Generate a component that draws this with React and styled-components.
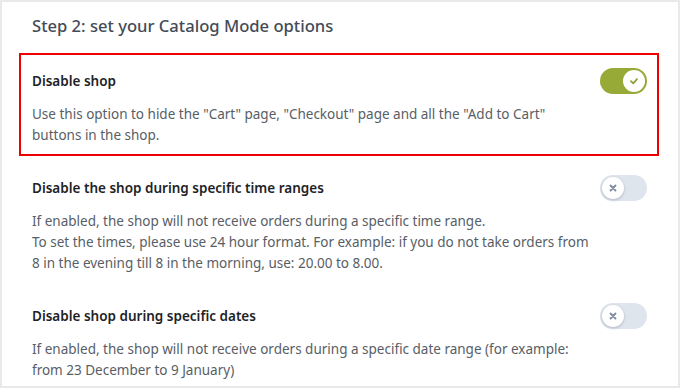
import React from 'react'
import styled, { createGlobalStyle } from 'styled-components';

const GlobalStyle = createGlobalStyle`
body {
    margin: 0;
    background: #ffffff;
}
* {
    box-sizing: border-box;
}
`

const Card = styled.div`
width: 680px;
height: 388px;
overflow: hidden;
background: #ffffff;
border: 2px solid #e9e9e9;
padding: 12px 19px 0 17px;
font-family: "Noto Sans", "Open Sans", sans-serif;
display: flex;
flex-direction: column;
`

const Heading = styled.h2`
margin: 0 0 15px 13px;
font-size: 16.6px;
line-height: 24px;
font-weight: 500;
color: #434b57;
`

const Options = styled.div`
display: flex;
flex-direction: column;
gap: 4px;
`

const Option = styled.div`
display: flex;
align-items: flex-start;
justify-content: space-between;
gap: 12px;
padding: 16px 10px 8px 11px;
border: 2px solid ${props => props.highlight ? '#ee0000' : 'transparent'};
`

const Text = styled.div`
flex: 1;
min-width: 0;
display: flex;
flex-direction: column;
gap: 12px;
`

const Title = styled.div`
font-size: 13.5px;
line-height: 21px;
font-weight: 600;
color: #1d2327;
`

const Descr = styled.div`
font-size: 13.5px;
line-height: 21px;
color: #585e66;
white-space: nowrap;
`

const Track = styled.div`
flex-shrink: 0;
margin-top: -3px;
width: 47px;
height: 26px;
border-radius: 13px;
padding: 2px;
display: flex;
justify-content: ${props => props.on ? 'flex-end' : 'flex-start'};
background: ${props => props.on ? '#97aa38' : '#dfe5ec'};
`

const Knob = styled.div`
width: 22px;
height: 22px;
border-radius: 50%;
background: #ffffff;
display: flex;
align-items: center;
justify-content: center;
box-shadow: ${props => props.on ? 'none' : '0 1px 3px rgba(60, 70, 90, 0.3)'};
`

const Toggle = ({on}) => {
    return (
        <Track on={on}>
            <Knob on={on}>
                {on ? (
                    <svg width="12" height="12" viewBox="0 0 12 12">
                        <path d="M3 6.2 L5.2 8.3 L9 4.2" fill="none" stroke="#8da033" strokeWidth="1.8" strokeLinecap="round" strokeLinejoin="round" />
                    </svg>
                ) : (
                    <svg width="10" height="10" viewBox="0 0 10 10">
                        <path d="M2.5 2.5 L7.5 7.5 M7.5 2.5 L2.5 7.5" fill="none" stroke="#7f8a9a" strokeWidth="1.8" strokeLinecap="round" />
                    </svg>
                )}
            </Knob>
        </Track>
    )
}

const options = [
    {
        title: 'Disable shop',
        on: true,
        highlight: true,
        lines: ['Use this option to hide the "Cart" page, "Checkout" page and all the "Add to Cart"', 'buttons in the shop.']
    },
    {
        title: 'Disable the shop during specific time ranges',
        on: false,
        lines: [
            'If enabled, the shop will not receive orders during a specific time range.',
            'To set the times, please use 24 hour format. For example: if you do not take orders from',
            '8 in the evening till 8 in the morning, use: 20.00 to 8.00.'
        ]
    },
    {
        title: 'Disable shop during specific dates',
        on: false,
        lines: ['If enabled, the shop will not receive orders during a specific date range (for example:', 'from 23 December to 9 January)']
    }
]

const App = () => {
    return (
        <>
            <GlobalStyle />
            <Card>
                <Heading>Step 2: set your Catalog Mode options</Heading>
                <Options>
                    {options.map(opt => (
                        <Option key={opt.title} highlight={opt.highlight}>
                            <Text>
                                <Title>{opt.title}</Title>
                                <Descr>
                                    {opt.lines.map((line, i) => (
                                        <React.Fragment key={i}>
                                            {i > 0 && <br />}
                                            {line}
                                        </React.Fragment>
                                    ))}
                                </Descr>
                            </Text>
                            <Toggle on={opt.on} />
                        </Option>
                    ))}
                </Options>
            </Card>
        </>
    )
}

export default App;
